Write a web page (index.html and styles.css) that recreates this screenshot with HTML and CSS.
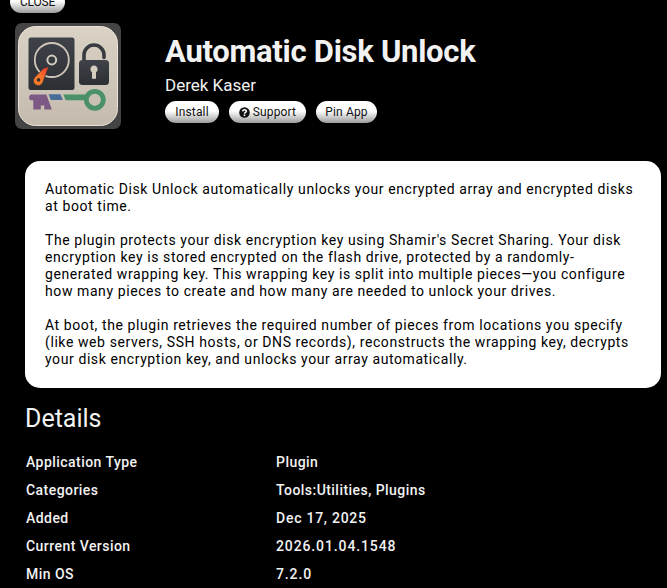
FILE: index.html
```html
<!DOCTYPE html>
<html lang="en">
<head>
    <meta charset="UTF-8">
    <meta name="viewport" content="width=device-width, initial-scale=1.0">
    <title>Automatic Disk Unlock</title>
    <link rel="stylesheet" href="styles.css">
</head>
<body>
    <div class="popup">
        <button class="btn close" type="button">CLOSE</button>
        <div class="header">
            <div class="app-icon">
                <svg width="106" height="106" viewBox="0 0 106 106">
                    <defs>
                        <linearGradient id="tile" x1="0" y1="0" x2="0" y2="1">
                            <stop offset="0" stop-color="#d9d2c5"/>
                            <stop offset="1" stop-color="#c4bbad"/>
                        </linearGradient>
                        <linearGradient id="dark" x1="0" y1="0" x2="0" y2="1">
                            <stop offset="0" stop-color="#3f4349"/>
                            <stop offset="1" stop-color="#2c2f34"/>
                        </linearGradient>
                        <linearGradient id="arm" x1="1" y1="0" x2="0" y2="1">
                            <stop offset="0" stop-color="#e8322c"/>
                            <stop offset="0.6" stop-color="#fb7a2a"/>
                        </linearGradient>
                    </defs>
                    <rect x="3.5" y="3.5" width="99" height="99" rx="17" fill="url(#tile)" stroke="#e9e4db"/>
                    <!-- disk -->
                    <rect x="13.5" y="14.5" width="46" height="52.5" rx="2.5" fill="url(#dark)"/>
                    <circle cx="36.8" cy="37" r="17" fill="none" stroke="#cdc6b9" stroke-width="1.8"/>
                    <circle cx="36.8" cy="37" r="4.4" fill="none" stroke="#d3ccbf" stroke-width="2"/>
                    <path d="M33.8 43.5 L28.4 45.6 L19.9 54.3 A4.8 4.8 0 1 0 27.8 59.2 Z" fill="url(#arm)" stroke="#33363b" stroke-width="0.6"/>
                    <circle cx="23.6" cy="56.9" r="1.8" fill="#3a3230"/>
                    <!-- padlock -->
                    <path d="M69 38 V32 A10 10 0 0 1 89 32 V34.5" fill="none" stroke="#383b41" stroke-width="3.6" stroke-linecap="round"/>
                    <rect x="64" y="37" width="30" height="25" rx="3.5" fill="url(#dark)"/>
                    <path d="M77 55.8 V49.2 A3.6 3.6 0 1 1 81 49.2 V55.8 Z" fill="#d3ccbf"/>
                    <!-- key -->
                    <path d="M17 71.5 H31.4 L36.8 86.5 H29.3 V82.6 H25.8 V86.5 H18.3 V77.3 H17 A2.9 2.9 0 0 1 17 71.5 Z" fill="#7d5a85"/>
                    <path d="M33.6 71.2 H45.4 L48 77 H35.8 Z" fill="#4a6c98"/>
                    <path d="M48.3 71.4 H71 V77.2 H50.6 Z" fill="#4b9167"/>
                    <circle cx="79.8" cy="76.8" r="8.5" fill="none" stroke="#4b9167" stroke-width="4.8"/>
                </svg>
            </div>
            <div class="info">
                <div class="name">Automatic Disk Unlock</div>
                <div class="author">Derek Kaser</div>
                <div class="actions">
                    <button class="btn install" type="button">Install</button>
                    <button class="btn support" type="button">
                        <svg class="help" width="11" height="11" viewBox="0 0 11 11">
                            <circle cx="5.5" cy="5.5" r="5.3" fill="#111"/>
                            <path d="M3.6 4.3 C3.8 2.2 7.4 2.3 7.3 4.3 C7.2 5.5 5.6 5.3 5.5 6.8" fill="none" stroke="#fff" stroke-width="1.6"/>
                            <rect x="4.7" y="7.5" width="1.6" height="1.5" fill="#fff"/>
                        </svg>
                        <span>Support</span>
                    </button>
                    <button class="btn pin" type="button">Pin App</button>
                </div>
            </div>
        </div>

        <div class="description">
            <p>Automatic Disk Unlock automatically unlocks your encrypted array and encrypted disks<br>at boot time.</p>
            <p>The plugin protects your disk encryption key using Shamir's Secret Sharing. Your disk<br>encryption key is stored encrypted on the flash drive, protected by a randomly-<br>generated wrapping key. This wrapping key is split into multiple pieces—you configure<br>how many pieces to create and how many are needed to unlock your drives.</p>
            <p>At boot, the plugin retrieves the required number of pieces from locations you specify<br>(like web servers, SSH hosts, or DNS records), reconstructs the wrapping key, decrypts<br>your disk encryption key, and unlocks your array automatically.</p>
        </div>

        <h2>Details</h2>
        <table class="details">
            <tr><td>Application Type</td><td>Plugin</td></tr>
            <tr><td>Categories</td><td>Tools:Utilities, Plugins</td></tr>
            <tr><td>Added</td><td class="date">Dec 17, 2025</td></tr>
            <tr><td>Current Version</td><td class="version">2026.01.04.1548</td></tr>
            <tr><td>Min OS</td><td class="version">7.2.0</td></tr>
        </table>
    </div>
</body>
</html>
```
FILE: styles.css
```css
* {
    box-sizing: border-box;
}

html {
    background-color: #000;
    overflow: hidden;
}

body {
    margin: 0;
    height: 588px;
    overflow: hidden;
    background-color: #000;
    color: #f2f2f2;
    font-family: Roboto, "Noto Sans", sans-serif;
    font-size: 14px;
}

.popup {
    display: flow-root;
}

.btn {
    display: flex;
    align-items: center;
    justify-content: center;
    height: 22px;
    padding: 0;
    border: none;
    border-radius: 11px;
    background: linear-gradient(#fff 0%, #fff 45%, #9c9c9c 100%);
    color: #111;
    font-family: inherit;
    font-size: 12px;
    letter-spacing: 0.15px;
    white-space: nowrap;
}

.close {
    width: 55px;
    margin: -9px 0 0 10px;
    letter-spacing: -0.2px;
}

.header {
    display: flex;
    margin-top: 10px;
    padding-left: 15px;
}

.app-icon {
    width: 106px;
    height: 106px;
    border-radius: 7px;
    background-color: #444;
}

.app-icon svg {
    display: block;
}

.info {
    margin-left: 44px;
}

.name {
    margin-top: 10px;
    line-height: 38px;
    font-size: 31px;
    font-weight: 700;
    letter-spacing: -0.28px;
    white-space: nowrap;
}

.author {
    margin-top: 4px;
    line-height: 20px;
    font-size: 17px;
}

.actions {
    display: flex;
    gap: 10px;
    margin-top: 6px;
}

.install {
    width: 54px;
}

.support {
    width: 77px;
    gap: 3px;
}

.pin {
    width: 61px;
}

.description {
    width: 636px;
    height: 227px;
    margin: 32px 0 0 25px;
    padding: 20px;
    border-radius: 15px;
    background-color: #fff;
    color: #000;
    line-height: 17px;
    letter-spacing: 0.59px;
    white-space: nowrap;
}

.description p {
    margin: 0 0 17px;
}

h2 {
    margin: 15px 0 0 25px;
    line-height: 32px;
    font-size: 25px;
    font-weight: 400;
}

.details {
    margin: 13px 0 0 25px;
    border-collapse: collapse;
    font-weight: 500;
    letter-spacing: 0.45px;
}

.details td {
    height: 28px;
    padding: 0 0 0 1px;
    white-space: nowrap;
}

.details td:first-child {
    width: 250px;
}

.details .date {
    letter-spacing: 0.75px;
}

.details .version {
    letter-spacing: 0.88px;
}
```
